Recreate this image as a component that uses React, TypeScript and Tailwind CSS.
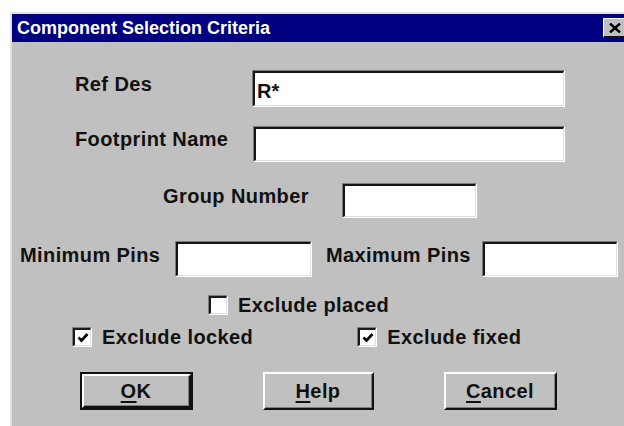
import React from "react";

const font = { fontFamily: '"Liberation Sans", Arial, sans-serif' };

function Field({ width, value }: { width: number; value?: string }) {
  return (
    <div
      className="h-full border-t border-l border-t-[#7c7c7c] border-l-[#7c7c7c] border-b border-r border-b-white border-r-white"
      style={{ width }}
    >
      <div className="h-full border-t-2 border-l-2 border-t-[#141414] border-l-[#141414] border-b border-r border-b-[#dedede] border-r-[#dedede] bg-white">
        {value ? (
          <span className="block pl-[2px] pt-[6px] text-[20px] leading-[24px] font-bold text-[#111]">
            {value}
          </span>
        ) : null}
      </div>
    </div>
  );
}

function Label({ children, width, mt = 1 }: { children: React.ReactNode; width: number; mt?: number }) {
  return (
    <span
      className="shrink-0 text-[20px] leading-[24px] font-bold text-[#111] tracking-[0.4px] whitespace-nowrap"
      style={{ width, marginTop: mt }}
    >
      {children}
    </span>
  );
}

function CheckBox({ checked }: { checked: boolean }) {
  return (
    <div className="w-[20px] h-[20px] shrink-0 border-t border-l border-t-[#7c7c7c] border-l-[#7c7c7c] border-b border-r border-b-white border-r-white">
      <div className="w-full h-full border-t-2 border-l-2 border-t-[#1a1a1a] border-l-[#1a1a1a] border-b border-r border-b-[#dedede] border-r-[#dedede] bg-white flex items-center justify-center">
        {checked ? (
          <svg width="12" height="11" viewBox="0 0 12 11">
            <path d="M1.5 5.5 L4.5 8.5 L10.5 2" fill="none" stroke="#000" strokeWidth="2.6" />
          </svg>
        ) : null}
      </div>
    </div>
  );
}

function Check({ checked, label }: { checked: boolean; label: string }) {
  return (
    <div className="flex items-center gap-[10px]">
      <CheckBox checked={checked} />
      <span className="text-[20px] leading-[24px] font-bold text-[#111] tracking-[0.4px] whitespace-nowrap">
        {label}
      </span>
    </div>
  );
}

function Button({
  width,
  def,
  first,
  rest,
}: {
  width: number;
  def?: boolean;
  first: string;
  rest: string;
}) {
  const inner = (
    <div className="h-full border-t-2 border-l-2 border-t-white border-l-white border-b-2 border-r-2 border-b-[#111] border-r-[#111]">
      <div className="h-full border-b border-r border-b-[#808080] border-r-[#808080] flex items-center justify-center">
        <span className="text-[20px] leading-[24px] font-bold text-[#111] tracking-[0.4px]">
          <u className="underline-offset-[3px] decoration-[1.5px]">{first}</u>
          {rest}
        </span>
      </div>
    </div>
  );
  return (
    <div
      className={def ? "h-[38px] border-2 border-[#111]" : "h-[38px]"}
      style={{ width }}
    >
      {def ? (
        <div className="h-full border-t-2 border-l-2 border-t-white border-l-white border-b-2 border-r-2 border-b-[#111] border-r-[#111]">
          <div className="h-full border-b border-r border-b-[#808080] border-r-[#808080] flex items-center justify-center">
            <span className="text-[20px] leading-[24px] font-bold text-[#111] tracking-[0.4px]">
              <u className="underline-offset-[3px] decoration-[1.5px]">{first}</u>
              {rest}
            </span>
          </div>
        </div>
      ) : (
        inner
      )}
    </div>
  );
}

export default function App() {
  return (
    <div className="w-[624px] h-[426px] overflow-hidden bg-white" style={font}>
      <div className="ml-[10px] mt-[12px] w-[622px] h-[420px] border-t-2 border-l-2 border-[#e2e2e2] bg-[#c0c0c0]">
        {/* title bar */}
        <div className="h-[28px] bg-[#000080] flex items-center pl-[5px] pr-[5px]">
          <span className="text-white font-bold text-[18px] leading-[22px]">
            Component Selection Criteria
          </span>
          <div className="ml-auto w-[24px] h-[20px] bg-[#c0c0c0] border-t border-l border-t-white border-l-white border-b-2 border-r-2 border-b-[#111] border-r-[#111] flex items-center justify-center">
            <svg width="12" height="10" viewBox="0 0 12 10">
              <path d="M1 0.5 L11 9.5 M11 0.5 L1 9.5" stroke="#000" strokeWidth="2.4" />
            </svg>
          </div>
        </div>

        {/* form body */}
        <div className="flex flex-col">
          <div className="flex items-start h-[37px] mt-[28px] pl-[63px]">
            <Label width={177} mt={2}>Ref Des</Label>
            <Field width={313} value="R*" />
          </div>

          <div className="flex items-start h-[36px] mt-[19px] pl-[63px]">
            <Label width={178} mt={1}>Footprint Name</Label>
            <Field width={312} />
          </div>

          <div className="flex items-start h-[35px] mt-[21px] pl-[151px]">
            <Label width={179} mt={1}>Group Number</Label>
            <Field width={135} />
          </div>

          <div className="flex items-start h-[36px] mt-[23px] pl-[8px]">
            <Label width={155} mt={2}>Minimum Pins</Label>
            <Field width={137} />
            <span className="w-[14px]" />
            <Label width={156} mt={2}>Maximum Pins</Label>
            <Field width={136} />
          </div>

          <div className="flex h-[20px] mt-[18px] pl-[196px]">
            <Check checked={false} label="Exclude placed" />
          </div>

          <div className="flex h-[20px] mt-[12px] pl-[60px]">
            <Check checked={true} label="Exclude locked" />
            <span className="w-[104px]" />
            <Check checked={true} label="Exclude fixed" />
          </div>

          <div className="flex mt-[25px] pl-[68px]">
            <Button width={113} def first="O" rest="K" />
            <span className="w-[70px]" />
            <Button width={111} first="H" rest="elp" />
            <span className="w-[70px]" />
            <Button width={113} first="C" rest="ancel" />
          </div>
        </div>
      </div>
    </div>
  );
}
